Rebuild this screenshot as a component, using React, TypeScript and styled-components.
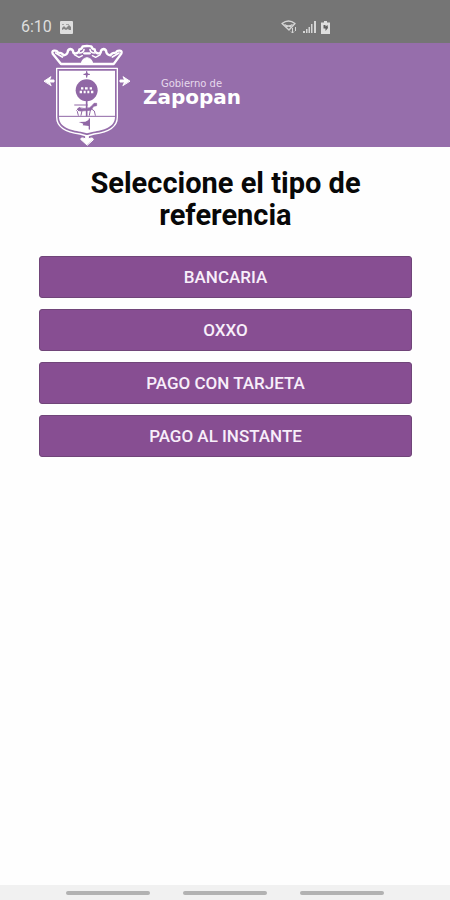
import React from "react";
import styled, { createGlobalStyle } from "styled-components";

const GlobalStyle = createGlobalStyle`
  *, *::before, *::after { box-sizing: border-box; }
  body { margin: 0; background: #fefefe; font-family: Roboto, "Liberation Sans", sans-serif; }
`;

const Screen = styled.div`
  min-height: 100vh;
  display: flex;
  flex-direction: column;
`;

const StatusBar = styled.div`
  display: flex;
  align-items: center;
  justify-content: space-between;
  height: 43px;
  padding: 11px 120px 0 21px;
  background: #757575;
  color: #dedede;
  font-size: 16px;
  line-height: 20px;
`;

const StatusGroup = styled.div<{ $gap: number }>`
  display: flex;
  align-items: center;
  gap: ${({ $gap }) => $gap}px;
`;

const Header = styled.header`
  display: flex;
  align-items: center;
  gap: 12px;
  height: 104px;
  padding: 0 43px;
  background: #966eab;
  color: #fff;
`;

const Brand = styled.div`
  display: flex;
  flex-direction: column;
  align-items: flex-end;
  padding-bottom: 6px;
  font-family: "DejaVu Sans", sans-serif;
`;

const BrandPrefix = styled.span`
  padding-right: 19px;
  font-size: 10px;
  line-height: 10px;
  color: #e6d9ec;
`;

const BrandName = styled.span`
  font-size: 20px;
  font-weight: 700;
  line-height: 16px;
`;

const Main = styled.main`
  flex: 1;
  padding: 20px 38px 20px 39px;
`;

const Title = styled.h1`
  max-width: 300px;
  margin: 0 auto 25px;
  color: #080808;
  font-size: 29px;
  font-weight: 700;
  line-height: 32px;
  text-align: center;
`;

const Options = styled.div`
  display: flex;
  flex-direction: column;
  gap: 11px;
`;

const OptionButton = styled.button`
  height: 42px;
  padding: 0 12px;
  border: 1px solid #704579;
  border-radius: 3px;
  background: #874e92;
  color: #f8eefa;
  font: 500 17px/20px Roboto, "Liberation Sans", sans-serif;
  text-transform: uppercase;
  cursor: pointer;
`;

const NavBar = styled.nav`
  display: flex;
  align-items: center;
  justify-content: center;
  gap: 33px;
  height: 15px;
  background: #f1f1f1;
`;

const NavKey = styled.button`
  width: 84px;
  height: 4px;
  padding: 0;
  border: 0;
  border-radius: 2px;
  background: #b2b2b2;
`;

const PhotoIcon = () => (
  <svg width="13" height="13" viewBox="0 0 13 13" aria-hidden="true">
    <rect width="13" height="13" rx="1" fill="#dedede" />
    <path d="M2 9V7l2-2 2 2 3-3 2 2v3H9L8 8 6 9 4 8z" fill="#858585" />
    <path d="M2 3h2v1H2zM6 3h3v1H6z" fill="#a5a5a5" />
  </svg>
);

const WifiIcon = () => (
  <svg width="17" height="14" viewBox="0 0 17 14" fill="none" stroke="#d5d5d5" aria-hidden="true">
    <path d="M1 3.500Q7.500-1.500 14 3.500L8 10Z" strokeWidth="1.400" strokeLinejoin="round" />
    <path d="M3.500 4.500q4 3 8 0M5 7q2.500-2 5 0" strokeWidth="1.400" />
    <path d="M11.500 8v5M10 11.500l1.500 1.500 1.500-1.500M14.500 7v4" strokeWidth="1" />
  </svg>
);

const SignalIcon = () => (
  <svg width="13" height="12" viewBox="0 0 13 12" fill="#d5d5d5" aria-hidden="true">
    <path d="M0 10h2v2H0zM3 8h1.500v4H3zM5.500 6H7v6H5.500zM8 3h1.500v9H8zM11 0h2v12h-2z" />
  </svg>
);

const BatteryIcon = () => (
  <svg width="9" height="13" viewBox="0 0 9 13" aria-hidden="true">
    <path d="M3 0h3v1.500h3V13H0V1.500h3z" fill="#dedede" />
    <path d="M2.500 4h2v1.500L6.500 4 7 7 4.500 10V7.500h-2z" fill="#606060" />
  </svg>
);

const Crest = () => (
  <svg width="88" height="102" viewBox="24 16 264 306" fill="none" stroke="#fff" strokeLinejoin="round" strokeLinecap="round" role="img" aria-label="Escudo de Zapopan">
    <path d="M78 76 53 45q-3-8 4-9 10-1 12 6 12 0 17 8 9-1 12-9 0-8 8-10 9 1 9 11 6 4 13 0 5-3 5-10 8 0 10-9 13-1 13-1 13 0 13 1 2 9 10 9 0 7 5 10 7 4 13 0 0-10 9-11 8 2 8 10 3 8 12 9 5-8 17-8 2-7 12-6 7 1 4 9L236 76z" strokeWidth="7" />
    <path d="m62 43 20 12M252 43l-20 12M133 43q12 0 14-10M179 43q-12 0-14-10" strokeWidth="5" />
    <path d="m118 48 14 8 10-5M196 48l-14 8-10-5" strokeWidth="4" />
    <path d="M139 75q1-16 17-18 16 2 17 18z" fill="#fff" strokeWidth="3" />
    <path d="M148 44h16" strokeWidth="7" />
    <path d="M65 89h182v146c0 34-37 47-70 51l-21 6-21-6c-33-4-70-17-70-51z" strokeWidth="4" />
    <path d="M72 96h168v139c0 31-36 40-65 44l-19 5-19-5c-29-4-65-13-65-44z" fill="#fff" stroke="none" />
    <g stroke="#9067a5">
      <path d="M72 233h168" strokeWidth="3" />
      <path d="M155 99v16M147 107h16" strokeWidth="4" />
      <path d="m155 101 6 6-6 6-6-6z" fill="#9067a5" stroke="none" />
      <circle cx="155" cy="155" r="33" fill="#9067a5" stroke="none" />
      <path d="M155 184v47" strokeWidth="5" />
      <path d="M119 199h38" strokeWidth="3" />
      <path d="M134 207q12 5 30 0l9-8 4-5h8v7l-9 2-8 12-33 2q-6 0-7-6z" fill="#9067a5" strokeWidth="2" />
      <path d="m135 211-8 8 3 11m11-14-3 14m28-15-3 15m8-18 7 5 3 13M133 207l-8 8" strokeWidth="3" />
      <path d="M163 241v30" strokeWidth="4" />
      <path d="M162 243l-11 6-20 1 14 5-2 5 19 2z" fill="#9067a5" stroke="none" />
    </g>
    <path d="M138 149h7m5 0h8m6 0h7M134 160h7m5 0h6m5 0h6m5 0h7" strokeWidth="7" strokeLinecap="butt" />
    <path d="M28 127 48 114l-5 10h14v6H43l5 10z" fill="#fff" strokeWidth="3" />
    <path d="M284 127 264 114l5 10h-14v6h14l-5 10z" fill="#fff" strokeWidth="3" />
    <path d="M156 319 137 302q1-8 15-1v-10h8v10q14-7 15 1z" fill="#fff" strokeWidth="3" />
  </svg>
);

const options = ["Bancaria", "OXXO", "Pago con tarjeta", "Pago al instante"];
const navKeys = ["Recientes", "Inicio", "Atrás"];

export default function App() {
  return (
    <>
      <GlobalStyle />
      <Screen>
        <StatusBar>
          <StatusGroup $gap={8}>
            <span>6:10</span>
            <PhotoIcon />
          </StatusGroup>
          <StatusGroup $gap={5}>
            <WifiIcon />
            <SignalIcon />
            <BatteryIcon />
          </StatusGroup>
        </StatusBar>
        <Header>
          <Crest />
          <Brand>
            <BrandPrefix>Gobierno de</BrandPrefix>
            <BrandName>Zapopan</BrandName>
          </Brand>
        </Header>
        <Main>
          <Title>Seleccione el tipo de referencia</Title>
          <Options>
            {options.map((label) => (
              <OptionButton key={label} type="button">
                {label}
              </OptionButton>
            ))}
          </Options>
        </Main>
        <NavBar>
          {navKeys.map((label) => (
            <NavKey key={label} type="button" aria-label={label} />
          ))}
        </NavBar>
      </Screen>
    </>
  );
}
